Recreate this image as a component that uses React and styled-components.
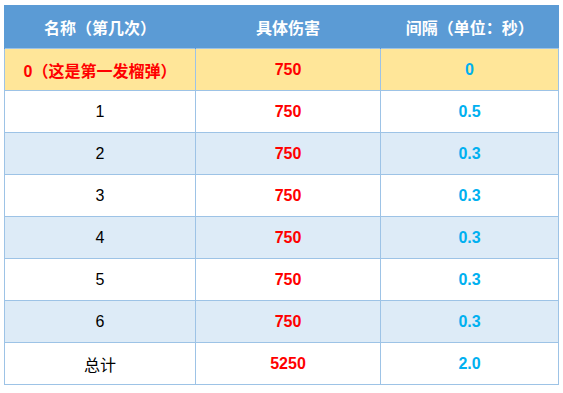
import React from "react";
import styled, { createGlobalStyle } from "styled-components";

const GlobalStyle = createGlobalStyle`
  body {
    margin: 0;
    background: #ffffff;
    font-family: "Liberation Sans", "Noto Sans CJK SC", sans-serif;
  }
`;

const Page = styled.div`
  padding: 5px 5px 0 4px;
`;

const Table = styled.table`
  width: 554px;
  border-collapse: collapse;
  table-layout: fixed;
  font-size: 16px;
`;

const HeadCell = styled.th`
  height: 43px;
  padding: 0;
  background: #5b9bd5;
  color: #ffffff;
  font-weight: bold;
  text-align: center;
  border-left: 1px solid #5b9bd5;
`;

const Row = styled.tr`
  background: ${(props) =>
    props.first ? "#ffe699" : props.shaded ? "#ddebf7" : "#ffffff"};
`;

const Cell = styled.td`
  height: 41px;
  padding: 0;
  text-align: center;
  border: 1px solid #9dc3e6;
  color: ${(props) => props.color || "#000000"};
  font-weight: ${(props) => (props.bold ? "bold" : "normal")};
`;

const rows = [
  { name: "0（这是第一发榴弹）", damage: "750", gap: "0" },
  { name: "1", damage: "750", gap: "0.5" },
  { name: "2", damage: "750", gap: "0.3" },
  { name: "3", damage: "750", gap: "0.3" },
  { name: "4", damage: "750", gap: "0.3" },
  { name: "5", damage: "750", gap: "0.3" },
  { name: "6", damage: "750", gap: "0.3" },
  { name: "总计", damage: "5250", gap: "2.0" },
];

const App = () => {
  return (
    <Page>
      <GlobalStyle />
      <Table>
        <colgroup>
          <col style={{ width: 191 }} />
          <col style={{ width: 185 }} />
          <col style={{ width: 178 }} />
        </colgroup>
        <thead>
          <tr>
            <HeadCell>名称（第几次）</HeadCell>
            <HeadCell>具体伤害</HeadCell>
            <HeadCell>间隔（单位：秒）</HeadCell>
          </tr>
        </thead>
        <tbody>
          {rows.map((row, index) => (
            <Row key={index} first={index === 0} shaded={index > 0 && index % 2 === 0}>
              <Cell color={index === 0 ? "#ff0000" : "#000000"} bold={index === 0}>
                {row.name}
              </Cell>
              <Cell color="#ff0000" bold>
                {row.damage}
              </Cell>
              <Cell color="#00b0f0" bold>
                {row.gap}
              </Cell>
            </Row>
          ))}
        </tbody>
      </Table>
    </Page>
  );
};

export default App;
